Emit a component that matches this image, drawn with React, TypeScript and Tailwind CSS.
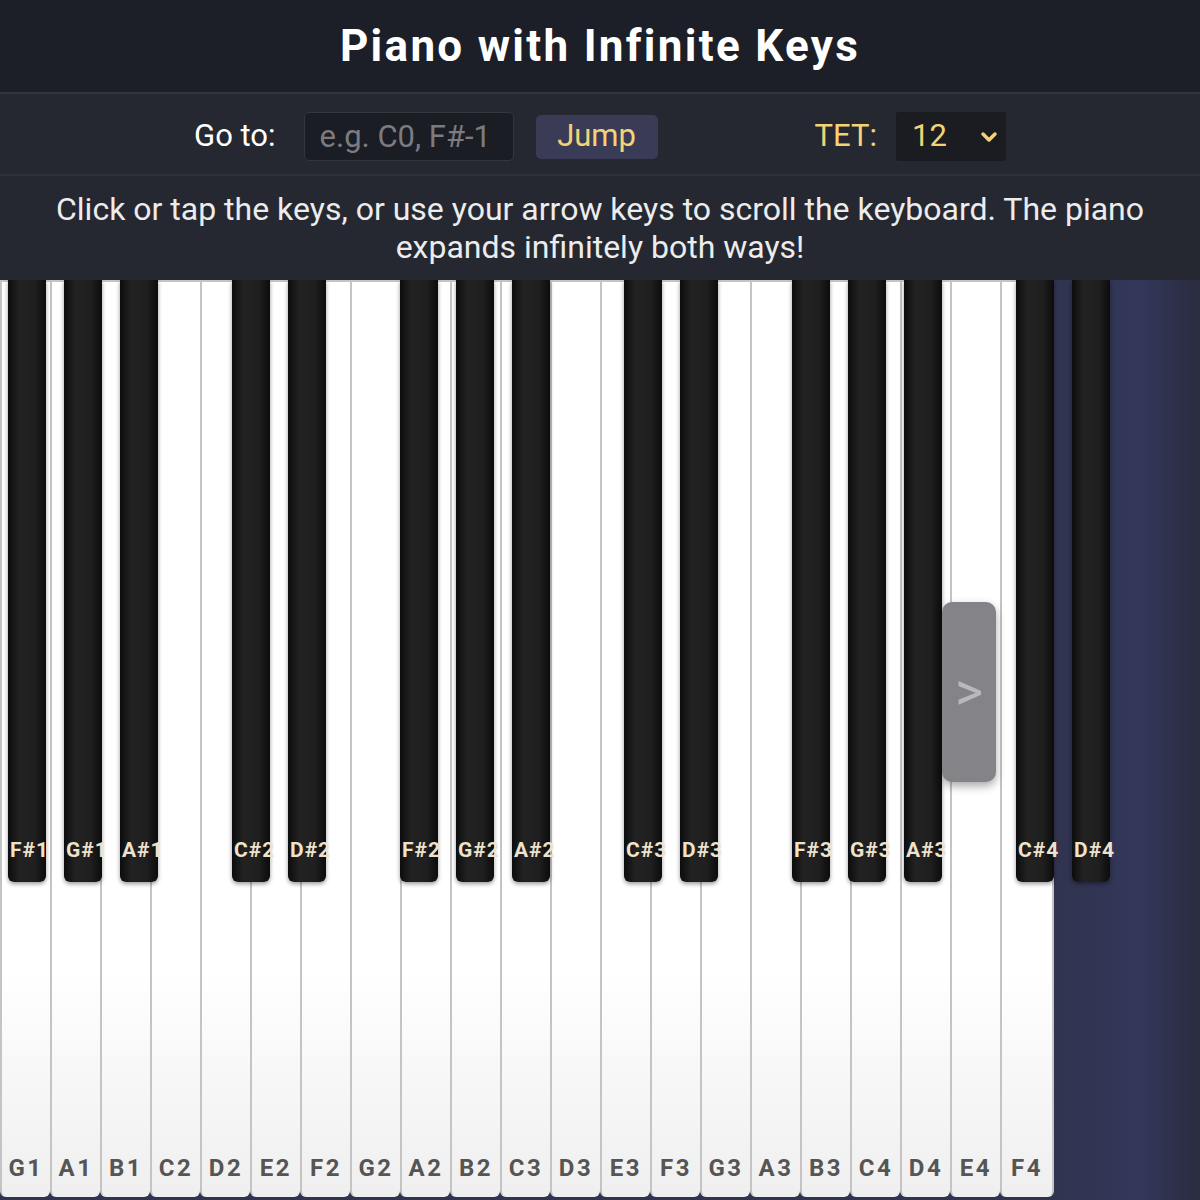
import { ChevronDown } from "lucide-react";

const whiteKeys = [
  "G1", "A1", "B1", "C2", "D2", "E2", "F2", "G2", "A2", "B2", "C3",
  "D3", "E3", "F3", "G3", "A3", "B3", "C4", "D4", "E4", "F4",
];

// null = empty slot (no black key between B/C and E/F)
const blackKeys: (string | null)[] = [
  "F#1", "G#1", "A#1", null, "C#2", "D#2", null,
  "F#2", "G#2", "A#2", null, "C#3", "D#3", null,
  "F#3", "G#3", "A#3", null, "C#4", "D#4",
];

const WhiteKey = ({ note, last }: { note: string; last: boolean }) => (
  <div
    className={`h-[917px] shrink-0 ${last ? "w-[54px] border-r-2" : "w-[50px]"} border-l-2 border-t-2 border-[#c4c4c4] rounded-b-[6px] bg-[linear-gradient(180deg,#ffffff_0%,#ffffff_75%,#efefef_100%)] flex items-end justify-center pb-[17px]`}
  >
    <span className="text-[24px] font-bold tracking-[2.5px] text-[#555555] leading-none">{note}</span>
  </div>
);

const BlackKey = ({ note }: { note: string | null }) => (
  <div className="w-[56px] shrink-0 pl-[8px]">
    {note && (
      <div className="w-[38px] h-[602px] rounded-b-[6px] bg-[linear-gradient(90deg,#0c0c0c_0%,#222222_30%,#1f1f1f_70%,#0c0c0c_100%)] shadow-[0_2px_4px_rgba(0,0,0,0.4)] flex items-end pb-[21px] pl-[2px]">
        <span className="text-[21px] font-bold tracking-[1px] text-[#ede2cd] leading-none whitespace-nowrap">{note}</span>
      </div>
    )}
  </div>
);

export default function App() {
  return (
    <div className="w-[1200px] h-[1200px] flex flex-col overflow-hidden bg-[#252831] font-['Roboto','Noto_Sans',sans-serif]">
      <header className="h-[94px] shrink-0 bg-[#1c1f27] border-b-2 border-[#33363f] flex items-center justify-center">
        <h1 className="text-[44px] font-bold tracking-[2.3px] text-white leading-none">Piano with Infinite Keys</h1>
      </header>

      <div className="h-[82px] shrink-0 pt-[5px] border-b-2 border-[#2f323b] flex items-center justify-center">
        <span className="text-[31px] text-white mr-[28px]">Go to:</span>
        <input
          className="w-[210px] h-[49px] bg-[#1b1d24] border border-[#34363e] rounded-[5px] px-[15px] text-[31px] text-[#e8e8e8] placeholder:text-[#7b7b80] outline-none"
          placeholder="e.g. C0, F#-1"
        />
        <button className="ml-[22px] w-[122px] h-[44px] bg-[#3a3b56] rounded-[5px] text-[31px] text-[#f4d377] flex items-center justify-center">
          Jump
        </button>
        <span className="ml-[157px] text-[31px] text-[#f4d377] mr-[19px]">TET:</span>
        <div className="w-[110px] h-[49px] bg-[#1a1c22] rounded-[3px] flex items-center justify-between pl-[16px] pr-[5px]">
          <span className="text-[31px] text-[#f4d377]">12</span>
          <ChevronDown className="w-[24px] h-[24px] text-[#f4d377]" strokeWidth={3.5} />
        </div>
      </div>

      <p className="h-[104px] shrink-0 pt-[14px] px-[30px] text-center text-[32px] leading-[38px] text-[#ececec]">
        Click or tap the keys, or use your arrow keys to scroll the keyboard. The piano expands infinitely both ways!
      </p>

      <div className="relative flex-1 overflow-hidden bg-[linear-gradient(90deg,#30344f_0%,#30344f_88%,#33375a_95%,#2a2c3f_100%)]">
        <div className="flex">
          {whiteKeys.map((note, i) => (
            <WhiteKey key={note} note={note} last={i === whiteKeys.length - 1} />
          ))}
        </div>

        <div className="absolute left-0 top-0 flex">
          {blackKeys.map((note, i) => (
            <BlackKey key={i} note={note} />
          ))}
        </div>

        <button className="absolute left-[942px] top-[322px] w-[54px] h-[180px] rounded-[10px] bg-[#838388] shadow-[0_4px_10px_rgba(0,0,0,0.35)] flex items-center justify-center">
          <span className="text-[54px] font-normal text-[#b9b9bd] leading-none">&gt;</span>
        </button>
      </div>
    </div>
  );
}
